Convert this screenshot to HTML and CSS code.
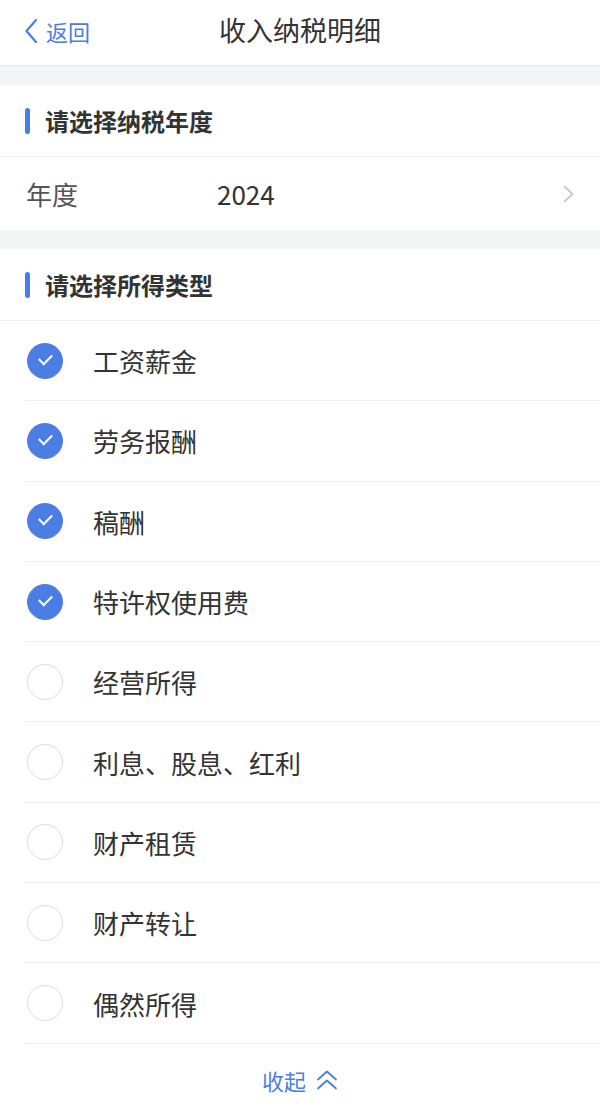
FILE: index.html
```html
<!DOCTYPE html>
<html lang="zh-CN">
<head>
  <meta charset="UTF-8" />
  <meta name="viewport" content="width=device-width, initial-scale=1" />
  <title>收入纳税明细</title>
  <link rel="stylesheet" href="styles.css">
</head>
<body>
  <!-- Nav bar -->
  <header class="navbar">
    <a class="back" href="#">
      <svg class="back-icon" viewBox="0 0 12 24" width="12" height="24">
        <path d="M11 1 L1.5 12 L11 23" fill="none" stroke="#4a7ee4" stroke-width="2.2" stroke-linecap="round" stroke-linejoin="round" />
      </svg>
      <span>返回</span>
    </a>
    <h1 class="nav-title">收入纳税明细</h1>
  </header>

  <div class="gap"></div>

  <!-- Year -->
  <section class="panel">
    <div class="section-title">请选择纳税年度</div>
    <div class="year-row">
      <span class="year-label">年度</span>
      <span class="year-value">2024</span>
      <svg class="arrow" viewBox="0 0 11 18" width="11" height="18">
        <path d="M1.5 1.5 L9.5 9 L1.5 16.5" fill="none" stroke="#c9c9c9" stroke-width="1.8" stroke-linecap="round" stroke-linejoin="round" />
      </svg>
    </div>
  </section>

  <div class="gap"></div>

  <!-- Income types -->
  <section class="panel">
    <div class="section-title">请选择所得类型</div>
    <ul class="options">
      <li class="option checked"><span class="radio"></span><span class="label">工资薪金</span></li>
      <li class="option checked"><span class="radio"></span><span class="label">劳务报酬</span></li>
      <li class="option checked"><span class="radio"></span><span class="label">稿酬</span></li>
      <li class="option checked"><span class="radio"></span><span class="label">特许权使用费</span></li>
      <li class="option"><span class="radio"></span><span class="label">经营所得</span></li>
      <li class="option"><span class="radio"></span><span class="label">利息、股息、红利</span></li>
      <li class="option"><span class="radio"></span><span class="label">财产租赁</span></li>
      <li class="option"><span class="radio"></span><span class="label">财产转让</span></li>
      <li class="option"><span class="radio"></span><span class="label">偶然所得</span></li>
    </ul>
    <div class="collapse">
      <span>收起</span>
      <svg class="collapse-icon" viewBox="0 0 22 20" width="22" height="20">
        <path d="M2 9.5 L11 1.5 L20 9.5" fill="none" stroke="#4a7ee4" stroke-width="1.8" stroke-linecap="round" stroke-linejoin="round" />
        <path d="M2 18.5 L11 10.5 L20 18.5" fill="none" stroke="#4a7ee4" stroke-width="1.8" stroke-linecap="round" stroke-linejoin="round" />
      </svg>
    </div>
  </section>
</body>
</html>
```

FILE: styles.css
```css
body {
  margin: 0;
  font-family: "Noto Sans CJK SC", "Noto Sans", sans-serif;
  background: #f4f5f7;
  color: #333;
}

.navbar {
  position: relative;
  height: 65px;
  background: #fff;
  border-bottom: 1px solid #e6e7ea;
  display: flex;
  align-items: center;
  justify-content: center;
}

.back {
  position: absolute;
  left: 25px;
  top: 19px;
  display: flex;
  align-items: center;
  gap: 9px;
  color: #4a7ee4;
  text-decoration: none;
  font-size: 22px;
  line-height: 24px;
}

.nav-title {
  margin: 0;
  font-size: 27px;
  font-weight: 400;
  color: #333;
  padding-bottom: 6px;
}

.gap {
  height: 19px;
}

.panel {
  background: #fff;
}

.section-title {
  height: 71px;
  border-bottom: 1px solid #eeeff1;
  display: flex;
  align-items: center;
  padding-left: 25px;
  font-size: 24px;
  font-weight: 700;
  color: #333;
}

.section-title::before {
  content: "";
  width: 5px;
  height: 26px;
  border-radius: 3px;
  background: #4a7ee4;
  margin-right: 15px;
}

.year-row {
  height: 73px;
  display: flex;
  align-items: center;
  padding: 0 26px;
  font-size: 26px;
}

.year-label {
  width: 191px;
  color: #555;
}

.year-value {
  flex: 1;
  color: #333;
}

.options {
  list-style: none;
  margin: 0;
  padding: 0;
}

.option {
  margin-left: 25px;
  height: 79.3px;
  border-bottom: 1px solid #eeeff1;
  display: flex;
  align-items: center;
  font-size: 26px;
  color: #333;
}

.radio {
  box-sizing: border-box;
  width: 36px;
  height: 36px;
  margin-left: 2px;
  margin-right: 30px;
  border-radius: 50%;
  border: 1.5px solid #dcdcdc;
  position: relative;
}

.option.checked .radio {
  background: #4a7ee4;
  border-color: #4a7ee4;
}

.option.checked .radio::after {
  content: "";
  position: absolute;
  left: 11px;
  top: 10px;
  width: 11px;
  height: 6px;
  border-left: 2px solid #fff;
  border-bottom: 2px solid #fff;
  transform: rotate(-45deg);
}

.collapse {
  height: 72px;
  display: flex;
  align-items: center;
  justify-content: center;
  gap: 10px;
  color: #4a7ee4;
  font-size: 22px;
}
```
